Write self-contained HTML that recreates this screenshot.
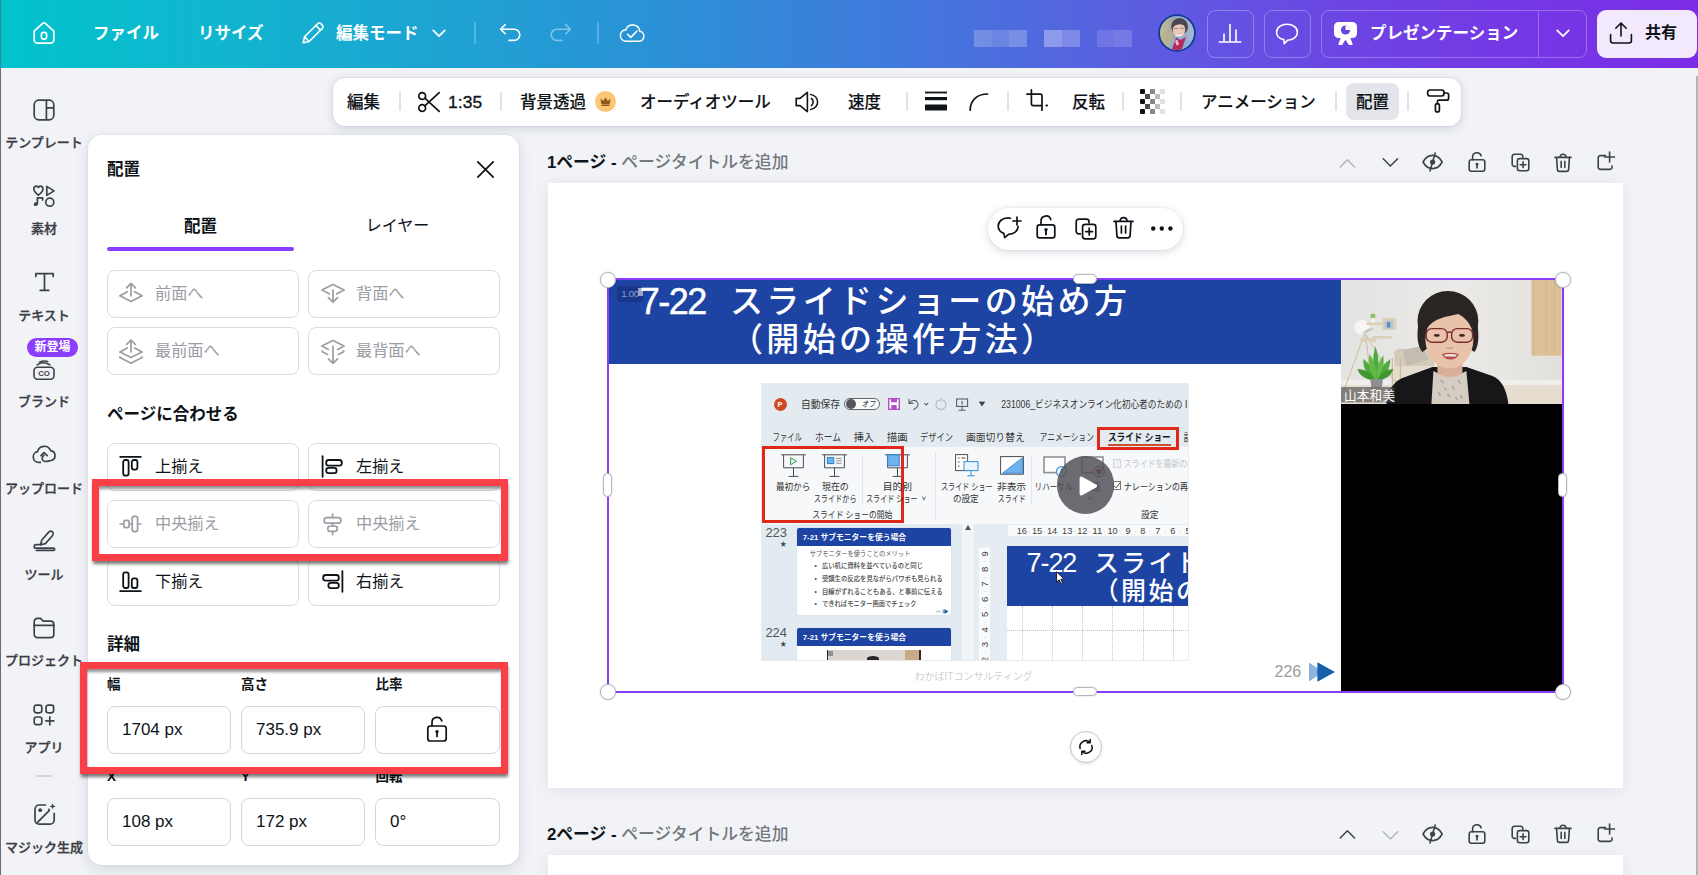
<!DOCTYPE html>
<html lang="ja">
<head>
<meta charset="utf-8">
<title>Canva</title>
<style>
*{box-sizing:border-box;margin:0;padding:0}
html,body{width:1698px;height:875px;overflow:hidden;background:#f2f3f7}
body{font-family:"Liberation Sans","Noto Sans CJK JP",sans-serif;color:#0e1318;position:relative}
.abs{position:absolute}
svg{display:block;overflow:visible}
/* header */
#hdr{position:absolute;left:0;top:0;width:1698px;height:68px;background:linear-gradient(90deg,#01c3cc 0%,#12b4cf 14%,#2a92d6 38%,#3f7bdc 52%,#5a5fe0 66%,#7040e4 82%,#7b2de6 100%)}
#hdr .t{position:absolute;top:0;height:66px;line-height:66px;color:#fff;font-weight:700;font-size:16.5px;white-space:nowrap}
#hdr .dv{position:absolute;top:22px;width:2px;height:22px;background:rgba(255,255,255,.24);border-radius:1px;margin-left:-.5px}
.hb{position:absolute;top:10px;height:48px;border:1px solid rgba(255,255,255,.28);border-radius:8px}
/* sidebar */
#side{position:absolute;left:0;top:68px;width:88px;height:807px}
#side .lb{position:absolute;left:0;width:88px;text-align:center;font-size:13px;font-weight:500;color:#3a3d44;white-space:nowrap;line-height:17px;-webkit-text-stroke:.3px #3a3d44}
#side .ic{position:absolute;left:32px;width:24px;height:24px}
#edge{position:absolute;left:0;top:0;width:1px;height:875px;background:linear-gradient(#2b9198 0,#2b9198 68px,#6b6b70 68px);z-index:50}
/* toolbar */
#tb{position:absolute;left:333px;top:78px;width:1128px;height:48px;background:#fff;border-radius:12px;box-shadow:0 0 0 1px rgba(64,87,109,.05),0 2px 10px rgba(64,87,109,.22)}
#tb .t{position:absolute;top:0;height:47px;line-height:48px;font-size:16.5px;font-weight:500;color:#0e1318;white-space:nowrap;-webkit-text-stroke:.15px #0e1318}
#tb .dv{position:absolute;top:14px;width:2px;height:19px;background:#e1e3e7;border-radius:1px;margin-left:-1px}
/* panel */
#pn{position:absolute;left:88px;top:135px;width:431px;height:730px;background:#fff;border-radius:14px;box-shadow:0 0 0 1px rgba(64,87,109,.04),0 4px 14px rgba(64,87,109,.18)}
.btn{position:absolute;height:48px;width:191.6px;border:1px solid #d9dbe0;border-radius:8px;background:#fff;font-size:16.2px;line-height:45px;white-space:nowrap}
.btn span{position:absolute;left:47px;top:0}
.btn.dis{color:#9a9da3}
.btn svg{position:absolute;left:12px;top:10px}
.h2{position:absolute;font-weight:700;font-size:16px;line-height:24px;white-space:nowrap}
.lab{position:absolute;font-weight:700;font-size:13.5px;line-height:18px;white-space:nowrap}
.inp{position:absolute;height:48px;border:1px solid #d5d7dc;border-radius:8px;font-family:'Liberation Sans',sans-serif;font-size:17px;line-height:46px;padding-left:14px;white-space:nowrap;background:#fff}
.red{position:absolute;border:7px solid #f84046;box-shadow:.5px 3.5px 3px -.5px rgba(0,0,0,.52),inset .5px 4px 3px -1px rgba(0,0,0,.42);z-index:5}
/* canvas */
.pt{position:absolute;font-size:16.8px;line-height:24px;white-space:nowrap;font-weight:700;color:#0e1318}
.pt i{font-style:normal;font-weight:500;color:#73777e}
.page{position:absolute;background:#fff;box-shadow:0 2px 14px rgba(64,87,109,.10)}
.hc{position:absolute;width:16px;height:16px;border-radius:50%;background:#fff;border:1px solid #b4b6bd;box-shadow:0 0 2px rgba(0,0,0,.2);z-index:6}
.hp{position:absolute;border-radius:5px;background:#fff;border:1px solid #b4b6bd;box-shadow:0 0 2px rgba(0,0,0,.2);z-index:6}
.pp{position:absolute;white-space:nowrap}
.ttl{position:absolute;white-space:nowrap;color:#fff;font-weight:500}
</style>
</head>
<body>
<div id="hdr">
<svg class="abs" style="left:32px;top:21px" width="24" height="24" viewBox="0 0 24 24" fill="none" stroke="#fff" stroke-width="1.7" stroke-linejoin="round" stroke-linecap="round"><path d="M2.2 10.2 10.4 2.7a2.4 2.4 0 0 1 3.2 0l8.2 7.5v8.6a3.4 3.4 0 0 1-3.4 3.4H5.6a3.4 3.4 0 0 1-3.4-3.4z"/><rect x="9.4" y="11.4" width="5.2" height="6.8" rx="2.2"/></svg>
<div class="t" style="left:93px">ファイル</div>
<div class="t" style="left:198px">リサイズ</div>
<svg class="abs" style="left:301px;top:21px" width="24" height="24" viewBox="0 0 24 24" fill="none" stroke="#fff" stroke-width="1.6" stroke-linejoin="round" stroke-linecap="round"><path d="M16.6 2.7a2.3 2.3 0 0 1 3.3 0l1.4 1.4a2.3 2.3 0 0 1 0 3.3L8.2 20.5 2.2 21.8 3.5 15.8z"/><path d="M15 4.6 19.4 9"/><path d="M3.6 15.9 8.1 20.4"/></svg>
<div class="t" style="left:336px">編集モード</div>
<svg class="abs" style="left:431px;top:25px" width="16" height="16" viewBox="0 0 16 16" fill="none" stroke="#fff" stroke-width="1.7" stroke-linecap="round" stroke-linejoin="round"><path d="M2.2 5.4 8 11.2 13.8 5.4"/></svg>
<div class="dv" style="left:474px"></div>
<svg class="abs" style="left:498px;top:21px" width="24" height="24" viewBox="0 0 24 24" fill="none" stroke="#fff" stroke-width="1.6" stroke-linecap="round" stroke-linejoin="round"><path d="M7.2 3.6 2.6 8.2l4.6 4.6"/><path d="M3 8.2h13.2a5.6 5.6 0 0 1 0 11.2H11"/></svg>
<svg class="abs" style="left:549px;top:21px;opacity:.42" width="24" height="24" viewBox="0 0 24 24" fill="none" stroke="#fff" stroke-width="1.6" stroke-linecap="round" stroke-linejoin="round"><path d="M16.8 3.6l4.6 4.6-4.6 4.6"/><path d="M21 8.2H7.8a5.6 5.6 0 0 0 0 11.2H13"/></svg>
<div class="dv" style="left:597px"></div>
<svg class="abs" style="left:618px;top:21px" width="27" height="24" viewBox="0 0 27 24" fill="none" stroke="#fff" stroke-width="1.6" stroke-linecap="round" stroke-linejoin="round"><path d="M7.2 20.2h13.4a5 5 0 0 0 1.2-9.9 7.2 7.2 0 0 0-13.9-1.6A5.8 5.8 0 0 0 7.2 20.2z"/><path d="M9.6 13.2l3.2 3.2 6.2-6.4"/></svg>
<!-- blurred title -->
<div class="abs" style="left:974px;top:30px;width:18px;height:17px;background:rgba(255,255,255,.22)"></div>
<div class="abs" style="left:992px;top:30px;width:17px;height:17px;background:rgba(255,255,255,.17)"></div>
<div class="abs" style="left:1009px;top:30px;width:18px;height:17px;background:rgba(255,255,255,.24)"></div>
<div class="abs" style="left:1044px;top:30px;width:18px;height:17px;background:rgba(255,255,255,.34)"></div>
<div class="abs" style="left:1062px;top:30px;width:18px;height:17px;background:rgba(255,255,255,.24)"></div>
<div class="abs" style="left:1097px;top:30px;width:17px;height:17px;background:rgba(255,255,255,.13)"></div>
<div class="abs" style="left:1114px;top:30px;width:18px;height:17px;background:rgba(255,255,255,.17)"></div>
<!-- avatar -->
<svg class="abs" style="left:1158px;top:14px" width="38" height="38" viewBox="0 0 38 38"><defs><clipPath id="avc"><circle cx="19" cy="19" r="17"/></clipPath><linearGradient id="avb" x1="0" x2="1"><stop offset="0" stop-color="#c6c19c"/><stop offset=".3" stop-color="#b1ae96"/><stop offset=".42" stop-color="#93a3c4"/><stop offset="1" stop-color="#a9bbd8"/></linearGradient></defs><circle cx="19" cy="19" r="18.8" fill="#0f3a9a"/><g clip-path="url(#avc)"><rect width="38" height="38" fill="url(#avb)"/><path d="M2 22l12-6 2 14-12 6z" fill="#b9b08e" opacity=".8"/><ellipse cx="21.6" cy="12.6" rx="8.4" ry="8.6" fill="#4b4750"/><ellipse cx="21" cy="15.8" rx="6.2" ry="7.6" fill="#e9c6b8"/><path d="M14.6 13.2q1-6 7-6.4 6 .2 7 6.6-3-3.2-7.4-3.2-4 .4-6.6 3z" fill="#4b4750"/><path d="M17.2 19.8q3.8 2.4 7.6 0-.8 2.6-3.8 2.6t-3.8-2.6z" fill="#fff" opacity=".9"/><path d="M15.8 14.4h4.4M22 14.4h4.4" stroke="#8d7480" stroke-width=".8"/><path d="M10 38q2-12 8-15l8-1q8 3 10 16z" fill="#8fb0d6"/><path d="M13 38l5-14.5 4.5 2.5 5.5-3L23 38z" fill="#b72a5f"/><path d="M17 27l2.5-1.5 1.5 5-2.5 1z" fill="#f0b6c8"/></g></svg>
<div class="hb" style="left:1207px;width:47px"></div>
<svg class="abs" style="left:1218px;top:21px" width="24" height="24" viewBox="0 0 24 24" fill="none" stroke="#fff" stroke-width="1.6" stroke-linecap="round"><path d="M1.2 21h21.6M6 20.5V13M12 20.5V3.6M18 20.5V9"/></svg>
<div class="hb" style="left:1264px;width:47px"></div>
<svg class="abs" style="left:1275px;top:21px" width="24" height="24" viewBox="0 0 24 24" fill="none" stroke="#fff" stroke-width="1.6" stroke-linecap="round" stroke-linejoin="round"><path d="M12 3.2c5.6 0 10.4 3.2 10.4 8 0 4.4-4.4 7.8-9.6 8L9.2 22.6l-.4-4C4.4 17.6 1.6 14.8 1.6 11.2c0-4.8 4.8-8 10.4-8z"/></svg>
<div class="hb" style="left:1321px;width:266px"></div>
<div class="abs" style="left:1538px;top:11px;width:1px;height:46px;background:rgba(255,255,255,.28)"></div>
<svg class="abs" style="left:1334px;top:22px" width="23" height="23" viewBox="0 0 23 23"><path d="M4.5 0h14a4.5 4.5 0 0 1 4.5 4.5v7a4.5 4.5 0 0 1-4.5 4.5h-2.2l2.2 5.6a1 1 0 0 1-1 1.4h-2a1 1 0 0 1-.9-.6L11.5 17.8 8.4 22.4a1 1 0 0 1-.9.6h-2a1 1 0 0 1-1-1.4L6.7 16H4.5A4.5 4.5 0 0 1 0 11.5v-7A4.5 4.5 0 0 1 4.5 0z" fill="#fff"/><circle cx="11.5" cy="8" r="4.6" fill="#6a45e2"/><path d="M11.5 8V3.4A4.6 4.6 0 0 1 16.1 8z" fill="#fff"/></svg>
<div class="t" style="left:1370px">プレゼンテーション</div>
<svg class="abs" style="left:1555px;top:25px" width="16" height="16" viewBox="0 0 16 16" fill="none" stroke="#fff" stroke-width="1.7" stroke-linecap="round" stroke-linejoin="round"><path d="M2.2 5.4 8 11.2 13.8 5.4"/></svg>
<div class="abs" style="left:1597px;top:10px;width:100px;height:48px;border-radius:9px;background:#f2e9fd"></div>
<svg class="abs" style="left:1609px;top:21px" width="24" height="24" viewBox="0 0 24 24" fill="none" stroke="#0e1318" stroke-width="1.6" stroke-linecap="round" stroke-linejoin="round"><path d="M12 15V2.2M6.8 7.2 12 2l5.2 5.2"/><path d="M1.6 13.6v6a2.4 2.4 0 0 0 2.4 2.4h16a2.4 2.4 0 0 0 2.4-2.4v-6"/></svg>
<div class="t" style="left:1645px;color:#0e1318;font-size:16px">共有</div>
</div>
<div id="side">
<svg class="abs" style="left:33px;top:30.5px" width="22" height="22" viewBox="0 0 22 22" fill="none" stroke="#3d4149" stroke-width="1.7" stroke-linejoin="round"><rect x="1.2" y="1.2" width="19.6" height="19.6" rx="4.6"/><path d="M13.4 1.2v19.6M13.4 8.8h7.4"/></svg>
<div class="lb" style="top:66.0px">テンプレート</div>
<svg class="abs" style="left:33px;top:116.5px" width="22" height="22" viewBox="0 0 22 22" fill="none" stroke="#3d4149" stroke-width="1.7" stroke-linejoin="round" stroke-linecap="round"><path d="M5.4 10.2C2.6 8 .9 6.2.9 3.9A2.4 2.4 0 0 1 5.4 2.5 2.4 2.4 0 0 1 9.9 3.9C9.9 6.2 8.2 8 5.4 10.2z"/><path d="M13.8 1.4v9l7.2-4.5z"/><circle cx="16.8" cy="17.2" r="4"/><path d="M4.4 18.8v-6h5.2v2.2"/><circle cx="2.7" cy="19.2" r="1.9" fill="#3d4149" stroke="none"/></svg>
<div class="lb" style="top:152.0px">素材</div>
<svg class="abs" style="left:34px;top:203.5px" width="22" height="20" viewBox="0 0 22 20" fill="none" stroke="#3d4149" stroke-width="1.7" stroke-linecap="round" stroke-linejoin="round"><path d="M1.8 4.4V1.6h17.4v2.8M10.5 1.6v16.8M6.2 18.4h8.6"/></svg>
<div class="lb" style="top:238.5px">テキスト</div>
<div class="abs" style="left:27px;top:270px;width:51px;height:18.5px;border-radius:10px;background:#8b3dff;color:#fff;font-size:12px;font-weight:700;line-height:18px;text-align:center;z-index:2">新登場</div>
<svg class="abs" style="left:33px;top:289.5px" width="22" height="22" viewBox="0 0 22 22" fill="none" stroke="#3d4149" stroke-width="1.6" stroke-linecap="round" stroke-linejoin="round"><rect x="1" y="9.2" width="20" height="12" rx="3.4"/><path d="M4.2 6.8C7.6 4.4 11.4 3.6 16.8 6.8"/><path d="M6.6 4.2c2.6-1.4 5-1.8 8-.6"/><text x="11" y="18.3" font-family="Liberation Sans, sans-serif" font-size="7.8" font-weight="700" text-anchor="middle" fill="#3d4149" stroke="none">CO</text></svg>
<div class="lb" style="top:324.5px">ブランド</div>
<svg class="abs" style="left:32px;top:375px" width="24" height="21" viewBox="0 0 24 21" fill="none" stroke="#3d4149" stroke-width="1.7" stroke-linecap="round" stroke-linejoin="round"><path d="M8.4 19.4H6.6A5.4 5.4 0 0 1 5.6 8.7 6.8 6.8 0 0 1 18.6 7.6a5 5 0 0 1 .2 9.9c-2.4.5-5.2 1.9-7.4.4-1.9-1.3-1.5-4.2.5-5.6"/><path d="M9 12.6l3.1-3 3.1 3"/></svg>
<div class="lb" style="top:411.5px">アップロード</div>
<svg class="abs" style="left:33px;top:461.5px" width="23" height="22" viewBox="0 0 23 22" fill="none" stroke="#3d4149" stroke-width="1.7" stroke-linecap="round" stroke-linejoin="round"><path d="M16.2 1.6a2.6 2.6 0 0 1 3.6 3.6l-7.4 8.4-4.8 1.2 1.2-4.8z"/><path d="M8.2 14.6H3a1.8 1.8 0 0 0 0 3.6h17.6a1.1 1.1 0 0 1 0 2.2H3.4"/></svg>
<div class="lb" style="top:498.0px">ツール</div>
<svg class="abs" style="left:33px;top:548.5px" width="22" height="22" viewBox="0 0 22 22" fill="none" stroke="#3d4149" stroke-width="1.7" stroke-linecap="round" stroke-linejoin="round"><path d="M1.2 8V4.6A3.2 3.2 0 0 1 4.4 1.4h3.2l2.6 2.8h7.4a3.2 3.2 0 0 1 3.2 3.2V17.4a3.2 3.2 0 0 1-3.2 3.2H4.4a3.2 3.2 0 0 1-3.2-3.2z"/><path d="M1.2 8.4h19.6"/></svg>
<div class="lb" style="top:584.0px">プロジェクト</div>
<svg class="abs" style="left:33px;top:635.5px" width="22" height="22" viewBox="0 0 22 22" fill="none" stroke="#3d4149" stroke-width="1.7" stroke-linecap="round" stroke-linejoin="round"><rect x="1.2" y="1.2" width="7.6" height="7.6" rx="2.2"/><rect x="13" y="1.2" width="7.6" height="7.6" rx="2.2"/><rect x="1.2" y="13" width="7.6" height="7.6" rx="2.2"/><path d="M16.8 12.8v8M12.8 16.8h8"/></svg>
<div class="lb" style="top:670.5px">アプリ</div>
<div class="abs" style="left:36px;top:707.2px;width:16px;height:1.5px;background:#d4d6db"></div>
<svg class="abs" style="left:33px;top:734px" width="24" height="24" viewBox="0 0 24 24" fill="none" stroke="#3d4149" stroke-width="1.7" stroke-linecap="round" stroke-linejoin="round"><path d="M12.4 3H6.2A4.2 4.2 0 0 0 2 7.2V18a4.2 4.2 0 0 0 4.2 4.2H17a4.2 4.2 0 0 0 4.2-4.2V11.4"/><path d="M4.2 20.6 16.4 8.4"/><circle cx="7.2" cy="8.2" r="1.9" fill="#3d4149" stroke="none"/><path d="M19.6 1.2l.9 2.3 2.3.9-2.3.9-.9 2.3-.9-2.3-2.3-.9 2.3-.9z" fill="#3d4149" stroke="none"/><circle cx="15.8" cy="7.4" r=".9" fill="#3d4149" stroke="none"/></svg>
<div class="lb" style="top:770.5px">マジック生成</div>
</div>
<div id="tb">
<div class="t" style="left:14px">編集</div>
<div class="dv" style="left:67px"></div>
<svg class="abs" style="left:84px;top:12px" width="24" height="24" viewBox="0 0 24 24" fill="none" stroke="#0e1318" stroke-width="1.7" stroke-linecap="round"><circle cx="5.2" cy="6" r="3.4"/><circle cx="5.2" cy="18" r="3.4"/><path d="M7.8 8.2 22.2 21.4M7.8 15.8 22.2 2.6"/></svg>
<div class="t" style="left:115px;font-family:'Liberation Sans',sans-serif;font-size:17.4px;font-weight:400;-webkit-text-stroke:.35px #0e1318;letter-spacing:.1px">1:35</div>
<div class="dv" style="left:168px"></div>
<div class="t" style="left:187px">背景透過</div>
<svg class="abs" style="left:262px;top:13px" width="21" height="21" viewBox="0 0 21 21"><circle cx="10.5" cy="10.5" r="10.5" fill="#fbc774"/><path d="M5.4 7.6l2.7 2.4 2.4-3.6 2.4 3.6 2.7-2.4-1 5.4H6.4z" fill="#8d5b1d"/><rect x="6.4" y="13.6" width="8.2" height="1.3" rx=".5" fill="#8d5b1d"/></svg>
<div class="t" style="left:307px">オーディオツール</div>
<svg class="abs" style="left:462px;top:12px" width="24" height="24" viewBox="0 0 24 24" fill="none" stroke="#0e1318" stroke-width="1.6" stroke-linecap="round" stroke-linejoin="round"><path d="M1.2 8.4h3.8L12.4 2.4v19.2L5 15.6H1.2z"/><path d="M16.4 8.4a4.6 4.6 0 0 1 0 7.2"/><path d="M15.6 4.4c4.4 1.2 7 4 7 7.6s-2.6 6.4-7 7.6" stroke-width="1.5"/></svg>
<div class="t" style="left:515px">速度</div>
<div class="dv" style="left:574px"></div>
<svg class="abs" style="left:592px;top:13px" width="22" height="21" viewBox="0 0 22 21"><rect x="0" y=".6" width="22" height="1.8" fill="#0e1318"/><rect x="0" y="6" width="22" height="3.2" fill="#0e1318"/><rect x="0" y="13.4" width="22" height="6.2" rx=".6" fill="#0e1318"/></svg>
<svg class="abs" style="left:636px;top:14px" width="20" height="20" viewBox="0 0 20 20" fill="none" stroke="#0e1318" stroke-width="1.7" stroke-linecap="round"><path d="M1.2 18.2C1.2 8.2 8.2 2 18.6 2"/></svg>
<div class="dv" style="left:675px"></div>
<svg class="abs" style="left:692px;top:10px" width="26" height="26" viewBox="0 0 26 26" fill="none" stroke="#0e1318" stroke-width="1.7" stroke-linecap="round" stroke-linejoin="round"><path d="M6.4 1.8v14.2a1.6 1.6 0 0 0 1.6 1.6h8.4"/><path d="M2 6.2h13.4a1.6 1.6 0 0 1 1.6 1.6v14.4"/><path d="M21.4 17.6h.6" stroke-width="2"/></svg>
<div class="t" style="left:739px">反転</div>
<div class="dv" style="left:790px"></div>
<svg class="abs" style="left:807px;top:11px" width="25" height="25" viewBox="0 0 25 25"><g fill="#0e1318"><rect x="0" y="0" width="5" height="5" rx="1"/><rect x="0" y="10" width="5" height="5" rx="1"/><rect x="0" y="20" width="5" height="5" rx="1"/><rect x="5" y="5" width="5" height="5" opacity=".75"/><rect x="5" y="15" width="5" height="5" opacity=".75"/><rect x="10" y="0" width="5" height="5" opacity=".5"/><rect x="10" y="10" width="5" height="5" opacity=".5"/><rect x="10" y="20" width="5" height="5" opacity=".5"/><rect x="15" y="5" width="5" height="5" opacity=".28"/><rect x="15" y="15" width="5" height="5" opacity=".28"/><rect x="20" y="0" width="5" height="5" opacity=".12"/><rect x="20" y="10" width="5" height="5" opacity=".12"/><rect x="20" y="20" width="5" height="5" opacity=".12"/></g></svg>
<div class="dv" style="left:848px"></div>
<div class="t" style="left:868px">アニメーション</div>
<div class="dv" style="left:1003px"></div>
<div class="abs" style="left:1013px;top:5px;width:53px;height:37px;border-radius:8px;background:#e3e5ea"></div>
<div class="t" style="left:1023px">配置</div>
<div class="dv" style="left:1075px"></div>
<svg class="abs" style="left:1092px;top:10px" width="26" height="26" viewBox="0 0 26 26" fill="none" stroke="#0e1318" stroke-width="1.7" stroke-linecap="round" stroke-linejoin="round"><rect x="2.6" y="2" width="16.4" height="6" rx="2.4"/><path d="M19 5h2.6a2 2 0 0 1 2 2v3.2a2 2 0 0 1-2 2H14a1.6 1.6 0 0 0-1.6 1.6v1.8"/><rect x="10.4" y="15.6" width="4" height="8.4" rx="2"/></svg>
</div>
<div id="pn">
<div class="h2" style="left:19px;top:22px;font-size:16.5px">配置</div>
<svg class="abs" style="left:388px;top:25px" width="19" height="19" viewBox="0 0 19 19" fill="none" stroke="#0e1318" stroke-width="1.7" stroke-linecap="round" stroke-linejoin="round"><path d="M1.8 1.8 17.2 17.2M17.2 1.8 1.8 17.2"/></svg>
<div class="h2" style="left:19px;top:79px;width:187px;text-align:center;font-size:16.5px">配置</div>
<div class="h2" style="left:216px;top:79px;width:187px;text-align:center;font-weight:400;font-size:16px">レイヤー</div>
<div class="abs" style="left:19px;top:112px;width:187px;height:4px;border-radius:2px;background:#8b3dff"></div>
<div class="btn dis" style="left:19px;top:135px"><span>前面へ</span></div><svg class="abs" style="left:30.5px;top:146px" width="24" height="24" viewBox="0 0 24 24" fill="none" stroke="#9a9da3" stroke-width="1.7" stroke-linecap="round" stroke-linejoin="round"><path d="M7.6 6.9 12 2.4l4.4 4.5M12 2.6V14.8"/><path d="M8.4 10.7.9 14.8 12 20.4l11.1-5.6-7.5-4.1"/></svg>
<div class="btn dis" style="left:220px;top:135px"><span>背面へ</span></div><svg class="abs" style="left:232.5px;top:147.4px" width="24" height="24" viewBox="0 0 24 24" fill="none" stroke="#9a9da3" stroke-width="1.7" stroke-linecap="round" stroke-linejoin="round"><path d="M7.4 15.6 12 20.2l4.6-4.6M12 8.2V20"/><path d="M8.2 11.8.9 8.1 12 2.6l11.1 5.5-7.3 3.7"/></svg>
<div class="btn dis" style="left:19px;top:192px"><span>最前面へ</span></div><svg class="abs" style="left:30.5px;top:202.6px" width="24" height="28" viewBox="0 0 24 28" fill="none" stroke="#9a9da3" stroke-width="1.7" stroke-linecap="round" stroke-linejoin="round"><path d="M7.6 6.5 12 2l4.4 4.5M12 2.2V14"/><path d="M8.4 10 .9 14 12 19.6 23.1 14l-7.5-4"/><path d="M.9 18.8v.8L12 25.2l11.1-5.6v-.8"/></svg>
<div class="btn dis" style="left:220px;top:192px"><span>最背面へ</span></div><svg class="abs" style="left:232.5px;top:202.8px" width="24" height="28" viewBox="0 0 24 28" fill="none" stroke="#9a9da3" stroke-width="1.7" stroke-linecap="round" stroke-linejoin="round"><path d="M7.4 20.8 12 25.4l4.6-4.6M12 8.4V25.2"/><path d="M7.4 11.4.9 8.1 12 2.6l11.1 5.5-6.5 3.3"/><path d="M6.6 16.4 1.4 13.8v-1M17.4 16.4l5.2-2.6v-1"/></svg>
<div class="h2" style="left:19px;top:266.5px;font-size:16.5px">ページに合わせる</div>
<div class="btn" style="left:19px;top:308px"><span>上揃え</span></div><svg class="abs" style="left:31px;top:320px" width="23" height="22" viewBox="0 0 23 22" fill="none" stroke="#0e1318" stroke-width="1.8" stroke-linecap="round" stroke-linejoin="round"><path d="M1.2 1.8h20.6"/><rect x="4.2" y="5" width="5.4" height="15.6" rx="2"/><rect x="12.8" y="5" width="5.6" height="9.6" rx="2"/></svg>
<div class="btn" style="left:220px;top:308px"><span>左揃え</span></div><svg class="abs" style="left:233px;top:320px" width="23" height="23" viewBox="0 0 23 23" fill="none" stroke="#0e1318" stroke-width="1.8" stroke-linecap="round" stroke-linejoin="round"><path d="M1.6 1.2v20.6"/><rect x="5.2" y="5" width="15.6" height="5.6" rx="2.4"/><rect x="5.2" y="12.8" width="10.4" height="5.4" rx="2.4"/></svg>
<div class="btn dis" style="left:19px;top:365px"><span>中央揃え</span></div><svg class="abs" style="left:31px;top:378.4px" width="23" height="22" viewBox="0 0 23 22" fill="none" stroke="#9a9da3" stroke-width="1.7" stroke-linecap="round" stroke-linejoin="round"><path d="M1.2 11h3.4M10.2 11h3M18.6 11h3.2"/><rect x="4.8" y="7.4" width="5.4" height="7.2" rx="2"/><rect x="13.2" y="3.4" width="5.4" height="15.2" rx="2"/></svg>
<div class="btn dis" style="left:220px;top:365px"><span>中央揃え</span></div><svg class="abs" style="left:233px;top:378.4px" width="23" height="23" viewBox="0 0 23 23" fill="none" stroke="#9a9da3" stroke-width="1.7" stroke-linecap="round" stroke-linejoin="round"><path d="M11.6 1.2v3.4M11.6 10.2v3M11.6 18.4v3.2"/><rect x="3.2" y="4.6" width="16.6" height="5.6" rx="2.4"/><rect x="6.8" y="13" width="9.4" height="5.4" rx="2.4"/></svg>
<div class="btn" style="left:19px;top:423px"><span>下揃え</span></div><svg class="abs" style="left:31px;top:434.6px" width="23" height="23" viewBox="0 0 23 23" fill="none" stroke="#0e1318" stroke-width="1.8" stroke-linecap="round" stroke-linejoin="round"><path d="M1.2 21.2h20.6"/><rect x="4.2" y="2.4" width="5.4" height="15.6" rx="2"/><rect x="12.8" y="8.4" width="5.6" height="9.6" rx="2"/></svg>
<div class="btn" style="left:220px;top:423px"><span>右揃え</span></div><svg class="abs" style="left:233px;top:434.6px" width="23" height="23" viewBox="0 0 23 23" fill="none" stroke="#0e1318" stroke-width="1.8" stroke-linecap="round" stroke-linejoin="round"><path d="M21.4 1.2v20.6"/><rect x="2.2" y="5" width="15.6" height="5.6" rx="2.4"/><rect x="7.4" y="12.8" width="10.4" height="5.4" rx="2.4"/></svg>
<div class="red" style="left:4.3px;top:344px;width:415.7px;height:82px"></div>
<div class="h2" style="left:19px;top:496.5px;font-size:16.5px">詳細</div>
<div class="lab" style="left:19px;top:541px">幅</div>
<div class="lab" style="left:153px;top:541px">高さ</div>
<div class="lab" style="left:287.5px;top:541px">比率</div>
<div class="inp" style="left:19px;top:571px;width:123.6px">1704 px</div>
<div class="inp" style="left:153px;top:571px;width:124.4px">735.9 px</div>
<div class="inp" style="left:287px;top:571px;width:125px"></div>
<svg class="abs" style="left:337px;top:579.5px" width="24" height="28" viewBox="0 0 24 28" fill="none" stroke="#0e1318" stroke-width="1.7" stroke-linecap="round" stroke-linejoin="round"><rect x="2.8" y="11" width="18.4" height="15" rx="2.6"/><path d="M7 11V7.4a5 5 0 0 1 9.8-1.4"/><circle cx="12" cy="16.6" r="1.7" fill="#0e1318" stroke="none"/><path d="M12 17v4.4" stroke-width="1.8"/></svg>
<div class="lab" style="left:19px;top:632.5px">X</div>
<div class="lab" style="left:153px;top:632.5px">Y</div>
<div class="lab" style="left:287.5px;top:632.5px">回転</div>
<div class="red" style="left:-8px;top:527px;width:428px;height:111.6px"></div>
<div class="inp" style="left:19px;top:663px;width:123.6px">108 px</div>
<div class="inp" style="left:153px;top:663px;width:124.4px">172 px</div>
<div class="inp" style="left:287px;top:663px;width:125px">0°</div>
</div>
<div id="cv">
<div class="pt" style="left:547px;top:150.8px">1ページ - <i>ページタイトルを追加</i></div>
<svg class="abs" style="left:1338.6px;top:158.4px" width="17" height="11" viewBox="0 0 17 11" fill="none" stroke="#b3b6bc" stroke-width="1.5" stroke-linecap="round" stroke-linejoin="round"><path d="M1.2 9 8.4 1.8 15.6 9"/></svg>
<svg class="abs" style="left:1381.6px;top:157.0px" width="17" height="11" viewBox="0 0 17 11" fill="none" stroke="#3d4149" stroke-width="1.5" stroke-linecap="round" stroke-linejoin="round"><path d="M1.2 1.8 8.4 9 15.6 1.8"/></svg>
<svg class="abs" style="left:1422.4px;top:152.0px" width="22" height="20" viewBox="0 0 22 20" fill="none" stroke="#3d4149" stroke-width="1.6" stroke-linecap="round" stroke-linejoin="round"><path d="M1 10c2.4-4.4 5.8-6.6 9.6-6.6s7.2 2.2 9.6 6.6c-2.4 4.4-5.8 6.6-9.6 6.6S3.4 14.4 1 10z"/><circle cx="10.6" cy="10" r="2.6" fill="#3d4149" stroke="none"/><path d="M13.2 1 8 19"/></svg>
<svg class="abs" style="left:1468.2px;top:151.2px" width="18" height="22" viewBox="0 0 18 22" fill="none" stroke="#3d4149" stroke-width="1.6" stroke-linecap="round" stroke-linejoin="round"><rect x="1.2" y="8.8" width="15.6" height="11.4" rx="2.2"/><path d="M4.6 8.8V6a4.4 4.4 0 0 1 8.6-1.2"/><circle cx="9" cy="13.2" r="1.4" fill="#3d4149" stroke="none"/><path d="M9 13.4v3.4" stroke-width="1.7"/></svg>
<svg class="abs" style="left:1510.6px;top:153.2px" width="19" height="19" viewBox="0 0 19 19" fill="none" stroke="#3d4149" stroke-width="1.6" stroke-linecap="round" stroke-linejoin="round"><path d="M4.6 13.4H3.4a2.2 2.2 0 0 1-2.2-2.2V3.4a2.2 2.2 0 0 1 2.2-2.2h6.2a2.2 2.2 0 0 1 2.2 2.2v.8"/><rect x="6.4" y="5.6" width="11.4" height="12.2" rx="2.2"/><path d="M12.1 8.8v5.8M9.2 11.7h5.8"/></svg>
<svg class="abs" style="left:1553.8px;top:152.6px" width="18" height="20" viewBox="0 0 18 20" fill="none" stroke="#3d4149" stroke-width="1.6" stroke-linecap="round" stroke-linejoin="round"><path d="M1 4.4h16"/><path d="M6 4.2c0-1.8 1.2-3 3-3s3 1.2 3 3"/><path d="M2.6 4.6l.8 12a2 2 0 0 0 2 1.8h7.2a2 2 0 0 0 2-1.8l.8-12"/><path d="M7.2 8.4v6M10.8 8.4v6"/></svg>
<svg class="abs" style="left:1597px;top:151.0px" width="19" height="20" viewBox="0 0 19 20" fill="none" stroke="#3d4149" stroke-width="1.6" stroke-linecap="round" stroke-linejoin="round"><path d="M8.6 4.6H3.4a2.2 2.2 0 0 0-2.2 2.2v9.4a2.2 2.2 0 0 0 2.2 2.2h9.4A2.2 2.2 0 0 0 15 16.2v-1.2"/><path d="M12.6 1v10M7.6 6h10"/></svg>
<div class="page" style="left:548px;top:182.5px;width:1074.6px;height:605px"></div>
<div class="pt" style="left:547px;top:822.6px">2ページ - <i>ページタイトルを追加</i></div>
<svg class="abs" style="left:1338.6px;top:828.6px" width="17" height="11" viewBox="0 0 17 11" fill="none" stroke="#3d4149" stroke-width="1.5" stroke-linecap="round" stroke-linejoin="round"><path d="M1.2 9 8.4 1.8 15.6 9"/></svg>
<svg class="abs" style="left:1381.6px;top:830.2px" width="17" height="11" viewBox="0 0 17 11" fill="none" stroke="#b3b6bc" stroke-width="1.5" stroke-linecap="round" stroke-linejoin="round"><path d="M1.2 1.8 8.4 9 15.6 1.8"/></svg>
<svg class="abs" style="left:1422.4px;top:823.8px" width="22" height="20" viewBox="0 0 22 20" fill="none" stroke="#3d4149" stroke-width="1.6" stroke-linecap="round" stroke-linejoin="round"><path d="M1 10c2.4-4.4 5.8-6.6 9.6-6.6s7.2 2.2 9.6 6.6c-2.4 4.4-5.8 6.6-9.6 6.6S3.4 14.4 1 10z"/><circle cx="10.6" cy="10" r="2.6" fill="#3d4149" stroke="none"/><path d="M13.2 1 8 19"/></svg>
<svg class="abs" style="left:1468.2px;top:823.0px" width="18" height="22" viewBox="0 0 18 22" fill="none" stroke="#3d4149" stroke-width="1.6" stroke-linecap="round" stroke-linejoin="round"><rect x="1.2" y="8.8" width="15.6" height="11.4" rx="2.2"/><path d="M4.6 8.8V6a4.4 4.4 0 0 1 8.6-1.2"/><circle cx="9" cy="13.2" r="1.4" fill="#3d4149" stroke="none"/><path d="M9 13.4v3.4" stroke-width="1.7"/></svg>
<svg class="abs" style="left:1510.6px;top:825.0px" width="19" height="19" viewBox="0 0 19 19" fill="none" stroke="#3d4149" stroke-width="1.6" stroke-linecap="round" stroke-linejoin="round"><path d="M4.6 13.4H3.4a2.2 2.2 0 0 1-2.2-2.2V3.4a2.2 2.2 0 0 1 2.2-2.2h6.2a2.2 2.2 0 0 1 2.2 2.2v.8"/><rect x="6.4" y="5.6" width="11.4" height="12.2" rx="2.2"/><path d="M12.1 8.8v5.8M9.2 11.7h5.8"/></svg>
<svg class="abs" style="left:1553.8px;top:824.4px" width="18" height="20" viewBox="0 0 18 20" fill="none" stroke="#3d4149" stroke-width="1.6" stroke-linecap="round" stroke-linejoin="round"><path d="M1 4.4h16"/><path d="M6 4.2c0-1.8 1.2-3 3-3s3 1.2 3 3"/><path d="M2.6 4.6l.8 12a2 2 0 0 0 2 1.8h7.2a2 2 0 0 0 2-1.8l.8-12"/><path d="M7.2 8.4v6M10.8 8.4v6"/></svg>
<svg class="abs" style="left:1597px;top:822.8px" width="19" height="20" viewBox="0 0 19 20" fill="none" stroke="#3d4149" stroke-width="1.6" stroke-linecap="round" stroke-linejoin="round"><path d="M8.6 4.6H3.4a2.2 2.2 0 0 0-2.2 2.2v9.4a2.2 2.2 0 0 0 2.2 2.2h9.4A2.2 2.2 0 0 0 15 16.2v-1.2"/><path d="M12.6 1v10M7.6 6h10"/></svg>
<div class="page" style="left:548px;top:855px;width:1074.6px;height:40px"></div>
<!-- floating toolbar -->
<div class="abs" style="left:988px;top:208px;width:195.4px;height:42px;border-radius:21px;background:#fff;box-shadow:0 0 0 1px rgba(64,87,109,.04),0 2px 9px rgba(64,87,109,.22)"></div>
<svg class="abs" style="left:996.6px;top:216px" width="26" height="25" viewBox="0 0 26 25" fill="none" stroke="#0e1318" stroke-width="1.7" stroke-linecap="round" stroke-linejoin="round"><path d="M13.4 2.2C12.6 2 11.8 1.9 11 1.9 5.6 1.9 1.2 5.4 1.2 10c0 3.2 2.2 6 5.6 7.4l.9 4.2 3.8-3.2c5.2-.2 9.4-3.4 9.6-7.8"/><path d="M20 1v8M16 5h8"/></svg>
<svg class="abs" style="left:1036.4px;top:214px" width="20" height="26" viewBox="0 0 20 26" fill="none" stroke="#0e1318" stroke-width="1.7" stroke-linecap="round" stroke-linejoin="round"><rect x="1.2" y="10.8" width="17.6" height="13" rx="2.4"/><path d="M5 10.8V7a5 5 0 0 1 9.8-1.4"/><circle cx="10" cy="15.6" r="1.7" fill="#0e1318" stroke="none"/><path d="M10 16v4.4" stroke-width="1.9"/></svg>
<svg class="abs" style="left:1074.6px;top:217.8px" width="22" height="22" viewBox="0 0 22 22" fill="none" stroke="#0e1318" stroke-width="1.7" stroke-linecap="round" stroke-linejoin="round"><path d="M5.4 15.8H3.8a2.6 2.6 0 0 1-2.6-2.6V3.8a2.6 2.6 0 0 1 2.6-2.6h7.6A2.6 2.6 0 0 1 14 3.8v1"/><rect x="7.6" y="6.4" width="13.2" height="14.4" rx="2.6"/><path d="M14.2 10.2v6.8M10.8 13.6h6.8"/></svg>
<svg class="abs" style="left:1113.4px;top:216px" width="21" height="24" viewBox="0 0 21 24" fill="none" stroke="#0e1318" stroke-width="1.7" stroke-linecap="round" stroke-linejoin="round"><path d="M1 5.4h19"/><path d="M7 5.2c0-2.2 1.4-3.6 3.5-3.6s3.5 1.4 3.5 3.6"/><path d="M3 5.6l.9 14a2.4 2.4 0 0 0 2.4 2.2h8.4a2.4 2.4 0 0 0 2.4-2.2l.9-14"/><path d="M8.4 10v7M12.6 10v7"/></svg>
<svg class="abs" style="left:1150px;top:225px" width="24" height="7" viewBox="0 0 24 7"><circle cx="3.2" cy="3.5" r="2.2" fill="#0e1318"/><circle cx="11.8" cy="3.5" r="2.2" fill="#0e1318"/><circle cx="20.4" cy="3.5" r="2.2" fill="#0e1318"/></svg>
<!--SLIDE--><div id="slide" class="abs" style="left:608.5px;top:280px;width:953px;height:410.6px;background:#fff;overflow:hidden">
<div class="abs" style="left:0;top:0;width:732.1px;height:83.6px;background:#1d43a3"></div>
<div class="abs" style="left:8.7px;top:5.6px;width:25.6px;height:16.4px;border-radius:3px;background:#19378a;color:#8d9cc9;font-size:9.6px;line-height:16px;text-align:center;font-family:'Liberation Sans',sans-serif;letter-spacing:-.3px">1.00</div>
<div class="abs" style="left:29.9px;top:7.6px;width:4.6px;height:8px;background:#aab3cc;opacity:.9"></div>
<div class="ttl" style="left:31.2px;top:-0.4px;font-size:36px;line-height:44px;letter-spacing:-1.5px;-webkit-text-stroke:.5px #fff">7-22</div>
<div class="ttl" style="left:121.4px;top:-0.2px;font-size:33px;line-height:44px;letter-spacing:3.4px">スライドショーの始め方</div>
<div class="ttl" style="left:121.4px;top:38px;font-size:33px;line-height:44px;letter-spacing:3.4px">（開始の操作方法）</div>
<div class="abs" style="left:153.5px;top:104px;width:426px;height:276px;overflow:hidden;box-shadow:0 0 0 1px rgba(0,0,0,.08);filter:blur(.35px)"><div class="abs" style="left:0;top:0;width:426px;height:63px;background:#e3ebf1"></div>
<div class="abs" style="left:0;top:63px;width:426px;height:77px;background:#f6f8fa"></div>
<div class="abs" style="left:0;top:140px;width:426px;height:136px;background:#e2ebf1"></div>
<div class="abs" style="left:12px;top:13.5px;width:13px;height:13px;border-radius:50%;background:#cf4a23"></div>
<div class="abs" style="left:82px;top:13.8px;width:36px;height:12.6px;border-radius:7px;border:1px solid #666;background:#fbfcfd"></div>
<div class="abs" style="left:84px;top:15px;width:10px;height:10px;border-radius:50%;background:#55565a"></div>
<svg class="abs" style="left:126px;top:14px" width="12" height="12" viewBox="0 0 12 12"><rect x=".7" y=".7" width="10.6" height="10.6" fill="#fff" stroke="#b650c2" stroke-width="1.4"/><rect x="3" y=".7" width="6" height="3.6" fill="#b650c2"/><rect x="3.4" y="7" width="5.2" height="4.2" fill="#b650c2"/></svg>
<svg class="abs" style="left:145px;top:13px" width="64" height="15" viewBox="0 0 64 15" fill="none" stroke="#5a5f66" stroke-width="1.1" stroke-linecap="round"><path d="M2 2.4v4h4M2.4 6c2-3 6-3.6 8-.8 1.6 2.4.4 5.4-3.6 7.2"/><path d="M17.6 6.4l1.6 1.6 1.6-1.6"/><path d="M36 3a5 5 0 1 1-4 0M34 1.2v3" stroke="#b4b9bf"/><rect x="49.6" y="2" width="11" height="7.4"/><path d="M55.1 9.4v3.6M52 13.2h6.2M55.1 4.4v2.6"/></svg>
<svg class="abs" style="left:217.4px;top:18px" width="6" height="5" viewBox="0 0 6 5"><path d="M0 0h6L3 4.4z" fill="#444"/><path d="M0 0h6" stroke="#444" stroke-width=".8"/></svg>
<div class="abs" style="left:346px;top:60.4px;width:63px;height:1.4px;background:#c8502a"></div>
<div class="abs" style="left:335px;top:42.6px;width:81.5px;height:23px;border:3px solid #e0281a"></div>
<svg class="abs" style="left:19px;top:69.6px" width="25" height="24" viewBox="0 0 25 24" fill="none" stroke="#4a4d52" stroke-width="1"><path d="M0 .8h25M2.6 .8v13h19.8v-13M12.5 13.8v8.4M7.6 22.4h9.8"/><path d="M9.6 3.6v7.2l6-3.6z" stroke="#3aa05a" fill="#dff2e3"/></svg>
<svg class="abs" style="left:60px;top:69.6px" width="25" height="24" viewBox="0 0 25 24" fill="none" stroke="#4a4d52" stroke-width="1"><path d="M0 .8h25M2.6 .8v13h19.8v-13M12.5 13.8v8.4M7.6 22.4h9.8"/><rect x="5.4" y="3.6" width="6.4" height="6" fill="#6db3ee" stroke="#2f7fc8"/><path d="M14 4.4h5.6M14 6.8h5.6M14 9.2h5.6" stroke="#8a8d92"/></svg>
<svg class="abs" style="left:123px;top:69.6px" width="25" height="24" viewBox="0 0 25 24" fill="none" stroke="#4a4d52" stroke-width="1"><path d="M0 .8h25M2.6 .8v13h19.8v-13M12.5 13.8v8.4M7.6 22.4h9.8"/><rect x="2.6" y=".8" width="11.6" height="11" fill="#6db3ee" stroke="#2f7fc8"/></svg>
<div class="abs" style="left:99.5px;top:72px;width:1px;height:48px;background:#e1e4e8"></div>
<div class="abs" style="left:172.5px;top:68px;width:1px;height:68px;background:#e1e4e8"></div>
<div class="abs" style="left:-0.4px;top:62px;width:142px;height:77px;border:3px solid #e0281a"></div>
<svg class="abs" style="left:193px;top:70px" width="26" height="24" viewBox="0 0 26 24" fill="none" stroke="#4a4d52" stroke-width="1"><rect x=".6" y=".6" width="12" height="16" fill="#fff"/><path d="M3 4h1.6M3 8h1.6M3 12h1.6M6.4 4h4"/><rect x="9" y="7.6" width="14" height="9" fill="#eaf4fc" stroke="#2f8fd8"/><path d="M16 16.6v5M12.4 21.8h7.2" stroke="#2f8fd8"/></svg>
<svg class="abs" style="left:237.6px;top:72.4px" width="24" height="19" viewBox="0 0 24 19"><rect x=".6" y=".6" width="22.8" height="17.6" fill="#fff" stroke="#4a4d52"/><path d="M2.4 17.2 22.4 1.8v15.4z" fill="#6db3ee" stroke="#2f7fc8" stroke-width=".8"/></svg>
<div class="abs" style="left:269px;top:72px;width:1px;height:48px;background:#e1e4e8"></div>
<svg class="abs" style="left:281px;top:72px" width="26" height="22" viewBox="0 0 26 22" fill="none"><rect x="1" y="1" width="21" height="15.6" fill="#fdfdfd" stroke="#8e9196" stroke-width="1.6"/><circle cx="18.4" cy="15.6" r="5" fill="#eef6fc" stroke="#3f8fd4" stroke-width="1.2"/><path d="M18.4 12.6v3.2h2" stroke="#3f8fd4" stroke-width="1"/></svg>
<svg class="abs" style="left:319px;top:72px" width="26" height="22" viewBox="0 0 26 22" fill="none"><rect x="1" y="1" width="21" height="15.6" fill="#fdfdfd" stroke="#8e9196" stroke-width="1.6"/><circle cx="18" cy="15.6" r="5.2" fill="#fff" stroke="#55585d" stroke-width="1"/><circle cx="18" cy="15.6" r="2.8" fill="#c7322c"/></svg>
<div class="abs" style="left:350.6px;top:75.4px;width:8.6px;height:8.6px;border:1px solid #d3d6da;background:#eef0f2"></div>
<div class="abs" style="left:350.6px;top:97.4px;width:8.6px;height:8.6px;border:1px solid #777;background:#fff"></div>
<svg class="abs" style="left:351.4px;top:98.4px" width="8" height="7" viewBox="0 0 8 7" fill="none" stroke="#444" stroke-width="1"><path d="M1 3.6 3 5.8 7 1"/></svg>
<div class="abs" style="left:34.7px;top:144px;width:154.3px;height:87.4px;background:#fff;border-radius:2px;overflow:hidden;box-shadow:0 0 1px rgba(0,0,0,.25)"><div style="height:18.3px;background:#1d43a3"></div></div>
<svg class="abs" style="left:174px;top:224.5px" width="13" height="5" viewBox="0 0 13 5"><rect x="0" y="1.5" width="5" height="2" fill="#d5d8dc"/><path d="M6.5 0v5L10 2.5z" fill="#7fb0dc"/><path d="M8.5 0v5l4-2.5z" fill="#1560a8"/></svg>
<div class="abs" style="left:34.7px;top:244.3px;width:154.3px;height:31.7px;background:#fff;border-radius:2px 2px 0 0;overflow:hidden;box-shadow:0 0 1px rgba(0,0,0,.25)"><div style="height:17.9px;background:#1d43a3"></div><div style="position:absolute;left:30px;top:21.4px;width:94.4px;height:12px;background:linear-gradient(90deg,#26282c 0,#26282c 1px,#d9d4cf 1px,#dcd7d2 78px,#c8ab86 78px,#c8ab86 92px,#2c2c2c 92px)"></div><div style="position:absolute;left:31px;top:22.4px;width:5px;height:5px;background:#8a8f98"></div><div style="position:absolute;left:70px;top:27.4px;width:12px;height:5px;border-radius:50% 50% 0 0;background:#2a2625"></div></div>
<div class="abs" style="left:200px;top:140px;width:12px;height:136px;background:#f1f5f8"></div>
<svg class="abs" style="left:203.4px;top:140.6px" width="6" height="5" viewBox="0 0 6 5"><path d="M0 5 3 0l3 5z" fill="#555"/></svg>
<div class="abs" style="left:213px;top:140px;width:213px;height:136px;background:#e6edf2"></div>
<div class="abs" style="left:246.4px;top:141px;width:179.6px;height:10.8px;background:#f8fafb"></div>
<div class="abs" style="left:216.7px;top:164px;width:11.8px;height:112px;background:#f8fafb"></div>
<div class="abs" style="left:245.2px;top:162.3px;width:180.8px;height:113.7px;background:#fff;overflow:hidden"><div style="height:60.1px;background:#1d43a3"></div><div style="position:absolute;left:14.6px;top:60px;width:0;height:54px;border-left:1px dotted #c2c6cb"></div><div style="position:absolute;left:44.6px;top:60px;width:0;height:54px;border-left:1px dotted #c2c6cb"></div><div style="position:absolute;left:74.8px;top:60px;width:0;height:54px;border-left:1px dotted #c2c6cb"></div><div style="position:absolute;left:105.3px;top:60px;width:0;height:54px;border-left:1px dotted #c2c6cb"></div><div style="position:absolute;left:135.5px;top:60px;width:0;height:54px;border-left:1px dotted #c2c6cb"></div><div style="position:absolute;left:165.4px;top:60px;width:0;height:54px;border-left:1px dotted #c2c6cb"></div><div style="position:absolute;left:0;top:84px;width:181px;height:0;border-top:1px dotted #c2c6cb"></div><div class="ttl" style="left:19.4px;top:0.6px;font-size:27px;line-height:32px;letter-spacing:-1.1px">7-22</div><div class="ttl" style="left:86.5px;top:1.2px;font-size:25px;line-height:32px;letter-spacing:2.4px">スライド</div><div class="ttl" style="left:86.5px;top:28.5px;font-size:25px;line-height:32px;letter-spacing:2.4px">（開始の操</div></div>
<svg class="abs" style="left:0;top:0" width="426" height="276" viewBox="0 0 426 276" font-family="Liberation Sans, Noto Sans CJK JP, sans-serif"><text x="15.6" y="22.9" font-size="7.5" fill="#fff" font-weight="700">P</text><text x="39" y="23.6" font-size="10" fill="#333" textLength="39" lengthAdjust="spacingAndGlyphs">自動保存</text><text x="99.5" y="23.1" font-size="8.6" fill="#333" textLength="14" lengthAdjust="spacingAndGlyphs" font-style="italic">オフ</text><text x="239.3" y="23.6" font-size="10" fill="#333" textLength="186" lengthAdjust="spacingAndGlyphs">231006_ビジネスオンライン化初心者のための I</text><text x="10.4" y="56.7" font-size="10.4" fill="#3a3a3a" textLength="29.6" lengthAdjust="spacingAndGlyphs">ファイル</text><text x="53" y="56.7" font-size="10.4" fill="#3a3a3a" textLength="26" lengthAdjust="spacingAndGlyphs">ホーム</text><text x="91.7" y="56.7" font-size="10.4" fill="#3a3a3a" textLength="20.3" lengthAdjust="spacingAndGlyphs">挿入</text><text x="124.7" y="56.7" font-size="10.4" fill="#3a3a3a" textLength="20.9" lengthAdjust="spacingAndGlyphs">描画</text><text x="158" y="56.7" font-size="10.4" fill="#3a3a3a" textLength="33" lengthAdjust="spacingAndGlyphs">デザイン</text><text x="204" y="56.7" font-size="10.4" fill="#3a3a3a" textLength="58.7" lengthAdjust="spacingAndGlyphs">画面切り替え</text><text x="277.5" y="56.7" font-size="10.4" fill="#3a3a3a" textLength="54.5" lengthAdjust="spacingAndGlyphs">アニメーション</text><text x="346" y="56.8" font-size="10.6" fill="#1a1a1a" textLength="62.7" lengthAdjust="spacingAndGlyphs" font-weight="700">スライド ショー</text><text x="421.4" y="56.7" font-size="10.4" fill="#3a3a3a">記</text><text x="13.9" y="105.9" font-size="9.3" fill="#333" textLength="34.4" lengthAdjust="spacingAndGlyphs">最初から</text><text x="60" y="105.9" font-size="9.3" fill="#333" textLength="26.8" lengthAdjust="spacingAndGlyphs">現在の</text><text x="51.7" y="118.1" font-size="9.3" fill="#333" textLength="42.9" lengthAdjust="spacingAndGlyphs">スライドから</text><text x="120.7" y="106.1" font-size="9.6" fill="#333" textLength="29.3" lengthAdjust="spacingAndGlyphs">目的別</text><text x="104" y="118.1" font-size="9.3" fill="#333" textLength="51.6" lengthAdjust="spacingAndGlyphs">スライド ショー</text><text x="159.4" y="117.3" font-size="8" fill="#333">˅</text><text x="50.3" y="133.7" font-size="9.3" fill="#333" textLength="80" lengthAdjust="spacingAndGlyphs">スライド ショーの開始</text><text x="179" y="105.9" font-size="9.3" fill="#333" textLength="51.6" lengthAdjust="spacingAndGlyphs">スライド ショー</text><text x="191" y="118.1" font-size="9.3" fill="#333" textLength="25.7" lengthAdjust="spacingAndGlyphs">の設定</text><text x="235" y="106.1" font-size="9.6" fill="#333" textLength="29" lengthAdjust="spacingAndGlyphs">非表示</text><text x="235.8" y="118.1" font-size="9.3" fill="#333" textLength="27.8" lengthAdjust="spacingAndGlyphs">スライド</text><text x="272.6" y="105.9" font-size="9.3" fill="#333" textLength="37.9" lengthAdjust="spacingAndGlyphs">リハーサル</text><text x="319" y="105.9" font-size="9.3" fill="#333" textLength="19.4" lengthAdjust="spacingAndGlyphs">録画</text><text x="325.6" y="117.1" font-size="8" fill="#333">˅</text><text x="361.8" y="83.4" font-size="9.4" fill="#c3c6ca" textLength="71.3" lengthAdjust="spacingAndGlyphs">スライドを最新の状</text><text x="361.8" y="105.5" font-size="9.6" fill="#333" textLength="72.3" lengthAdjust="spacingAndGlyphs">ナレーションの再生</text><text x="379" y="133.7" font-size="9.3" fill="#333" textLength="17.5" lengthAdjust="spacingAndGlyphs">設定</text><text x="3.4" y="153.0" font-size="12.8" fill="#555" textLength="21.6" lengthAdjust="spacingAndGlyphs">223</text><text x="18" y="161.8" font-size="6.5" fill="#444">★</text><text x="3.4" y="252.9" font-size="12.8" fill="#555" textLength="21.6" lengthAdjust="spacingAndGlyphs">224</text><text x="18" y="261.8" font-size="6.5" fill="#444">★</text><text x="40.8" y="155.9" font-size="7.6" fill="#fff" textLength="103.2" lengthAdjust="spacingAndGlyphs" font-weight="700">7-21 サブモニターを使う場合</text><text x="47.7" y="171.6" font-size="6.6" fill="#555" textLength="100.8" lengthAdjust="spacingAndGlyphs">サブモニターを使うことのメリット</text><text x="52.4" y="184.3" font-size="6.5" fill="#444">•</text><text x="59.9" y="184.4" font-size="6.6" fill="#444" textLength="101.1" lengthAdjust="spacingAndGlyphs" font-weight="500">広い机に資料を並べているのと同じ</text><text x="52.4" y="197.1" font-size="6.5" fill="#444">•</text><text x="59.9" y="197.2" font-size="6.6" fill="#444" textLength="120.8" lengthAdjust="spacingAndGlyphs" font-weight="500">受講生の反応を見ながらパワポも見られる</text><text x="52.4" y="209.8" font-size="6.5" fill="#444">•</text><text x="59.9" y="209.9" font-size="6.6" fill="#444" textLength="120.8" lengthAdjust="spacingAndGlyphs" font-weight="500">目線がずれることもある、と事前に伝える</text><text x="52.4" y="222.3" font-size="6.5" fill="#444">•</text><text x="59.9" y="222.4" font-size="6.6" fill="#444" textLength="94.7" lengthAdjust="spacingAndGlyphs" font-weight="500">できればモニター画面でチェック</text><text x="40.8" y="255.9" font-size="7.6" fill="#fff" textLength="103.2" lengthAdjust="spacingAndGlyphs" font-weight="700">7-21 サブモニターを使う場合</text><text x="254.7" y="150.1" font-size="9.6" fill="#444" textLength="10.2" lengthAdjust="spacingAndGlyphs">16</text><text x="266.2" y="148.8" font-size="6" fill="#777">·</text><text x="269.9" y="150.1" font-size="9.6" fill="#444" textLength="10.2" lengthAdjust="spacingAndGlyphs">15</text><text x="281.4" y="148.8" font-size="6" fill="#777">·</text><text x="284.9" y="150.1" font-size="9.6" fill="#444" textLength="10.2" lengthAdjust="spacingAndGlyphs">14</text><text x="296.4" y="148.8" font-size="6" fill="#777">·</text><text x="300.1" y="150.1" font-size="9.6" fill="#444" textLength="10.2" lengthAdjust="spacingAndGlyphs">13</text><text x="311.6" y="148.8" font-size="6" fill="#777">·</text><text x="315.2" y="150.1" font-size="9.6" fill="#444" textLength="10.2" lengthAdjust="spacingAndGlyphs">12</text><text x="326.7" y="148.8" font-size="6" fill="#777">·</text><text x="330.3" y="150.1" font-size="9.6" fill="#444" textLength="10.2" lengthAdjust="spacingAndGlyphs">11</text><text x="341.8" y="148.8" font-size="6" fill="#777">·</text><text x="345.5" y="150.1" font-size="9.6" fill="#444" textLength="10.2" lengthAdjust="spacingAndGlyphs">10</text><text x="357.0" y="148.8" font-size="6" fill="#777">·</text><text x="363.4" y="150.1" font-size="9.6" fill="#444" textLength="5.1" lengthAdjust="spacingAndGlyphs">9</text><text x="372.3" y="148.8" font-size="6" fill="#777">·</text><text x="378.2" y="150.1" font-size="9.6" fill="#444" textLength="5.1" lengthAdjust="spacingAndGlyphs">8</text><text x="387.1" y="148.8" font-size="6" fill="#777">·</text><text x="393.2" y="150.1" font-size="9.6" fill="#444" textLength="5.1" lengthAdjust="spacingAndGlyphs">7</text><text x="402.2" y="148.8" font-size="6" fill="#777">·</text><text x="408.2" y="150.1" font-size="9.6" fill="#444" textLength="5.1" lengthAdjust="spacingAndGlyphs">6</text><text x="417.2" y="148.8" font-size="6" fill="#777">·</text><text x="423.5" y="150.1" font-size="9.6" fill="#444" textLength="5.1" lengthAdjust="spacingAndGlyphs">5</text><text x="432.4" y="148.8" font-size="6" fill="#777">·</text><text x="222.8" y="169.9" font-size="9.6" fill="#444" text-anchor="middle" transform="rotate(-90 222.8 169.9)" dy="3.4">9</text><text x="222.8" y="179.3" font-size="6" fill="#777" text-anchor="middle">·</text><text x="222.8" y="185.2" font-size="9.6" fill="#444" text-anchor="middle" transform="rotate(-90 222.8 185.2)" dy="3.4">8</text><text x="222.8" y="194.6" font-size="6" fill="#777" text-anchor="middle">·</text><text x="222.8" y="200" font-size="9.6" fill="#444" text-anchor="middle" transform="rotate(-90 222.8 200)" dy="3.4">7</text><text x="222.8" y="209.4" font-size="6" fill="#777" text-anchor="middle">·</text><text x="222.8" y="215.3" font-size="9.6" fill="#444" text-anchor="middle" transform="rotate(-90 222.8 215.3)" dy="3.4">6</text><text x="222.8" y="224.7" font-size="6" fill="#777" text-anchor="middle">·</text><text x="222.8" y="230.2" font-size="9.6" fill="#444" text-anchor="middle" transform="rotate(-90 222.8 230.2)" dy="3.4">5</text><text x="222.8" y="239.6" font-size="6" fill="#777" text-anchor="middle">·</text><text x="222.8" y="245.7" font-size="9.6" fill="#444" text-anchor="middle" transform="rotate(-90 222.8 245.7)" dy="3.4">4</text><text x="222.8" y="255.1" font-size="6" fill="#777" text-anchor="middle">·</text><text x="222.8" y="260.6" font-size="9.6" fill="#444" text-anchor="middle" transform="rotate(-90 222.8 260.6)" dy="3.4">3</text><text x="222.8" y="270.0" font-size="6" fill="#777" text-anchor="middle">·</text><text x="222.8" y="275.6" font-size="9.6" fill="#444" text-anchor="middle" transform="rotate(-90 222.8 275.6)" dy="3.4">2</text><text x="222.8" y="285.0" font-size="6" fill="#777" text-anchor="middle">·</text></svg>
<svg class="abs" style="left:294.4px;top:186.6px" width="9" height="14" viewBox="0 0 9 14"><path d="M.6.8v10.4l2.6-2.4 1.8 4.2 1.6-.7L4.8 8.2h3.4z" fill="#fff" stroke="#111" stroke-width=".9"/></svg></div>
<div class="abs" style="left:448.3px;top:176.2px;width:57.4px;height:57.4px;border-radius:50%;background:rgba(80,80,86,.84)"></div>
<svg class="abs" style="left:468.1px;top:194.6px" width="25" height="22" viewBox="0 0 25 22"><path d="M2.6 3.2v15.6a1.6 1.6 0 0 0 2.4 1.4l14.2-7.8a1.6 1.6 0 0 0 0-2.8L5 1.8a1.6 1.6 0 0 0-2.4 1.4z" fill="#fff"/></svg>
<div class="abs" style="left:306.0px;top:389.5px;font-size:10px;line-height:13px;color:#cfcfcf;white-space:nowrap;letter-spacing:0">わかばITコンサルティング</div>
<div class="abs" style="left:666.1px;top:381px;font-size:16px;line-height:21px;color:#9c9c9c;white-space:nowrap;letter-spacing:-.1px">226</div>
<svg class="abs" style="left:700.5px;top:381.6px" width="27" height="20" viewBox="0 0 27 20"><path d="M0 .6v18.8L14 10z" fill="#8db4dc"/><path d="M8.4.2v19.6L26 10z" fill="#1560a8"/></svg>
<svg class="abs" style="left:732.1px;top:0px" width="221" height="124" viewBox="0 0 221 124">
<defs><linearGradient id="wl" x1="0" x2="1"><stop offset="0" stop-color="#e3e3e2"/><stop offset=".55" stop-color="#ebeae8"/><stop offset="1" stop-color="#e2e0dd"/></linearGradient></defs>
<rect width="221" height="124" fill="url(#wl)"/>
<rect x="0" y="104.5" width="221" height="20" fill="#e6dccf"/>
<rect x="0" y="100" width="221" height="5" fill="#efeeec"/>
<rect x="190.4" y="0" width="30" height="75.7" fill="#dcc198"/>
<path d="M192.4 0v75M205.4 0v75M213.4 0v75" stroke="#d2b58a" stroke-width="1"/>
<!-- lamp -->
<path d="M23.4 54 L2.4 112 M24.4 54 L31.4 112 M24.4 54 L57.4 108" stroke="#cdb98f" stroke-width=".9" fill="none"/>
<circle cx="20.9" cy="47.5" r="7.5" fill="#f6f6f4"/>
<path d="M21.4 55a9 9 0 0 1 12-6z" fill="#c9c6c0"/>
<!-- shelf -->
<path d="M25.4 42.6h16v2.4h-16zM41.4 38h14v12h-14zM31.4 56h20v2.4h-20zM19.4 58h16v4h-16z" fill="#ddd0b8"/>
<rect x="43.9" y="40.5" width="8.5" height="8" fill="#b9c6d2"/><rect x="45.9" y="42" width="3.4" height="5.6" fill="#5e90c4"/>
<circle cx="31.9" cy="36" r="2.6" fill="#9bbf6a"/><rect x="30.2" y="38" width="3.4" height="4.6" fill="#f2f1ee"/>
<!-- sofa -->
<path d="M53.4 72q2-4 8-3l26 2q6 0 6 6v25h-40z" fill="#d3cabc"/>
<path d="M61.4 70l20-4 6 14-22 6z" fill="#c4bcb0"/>
<rect x="51.4" y="86" width="44" height="14" rx="3" fill="#e4dccf"/>
<path d="M51.4 78v30M59.4 78v30" stroke="#cdb98f" stroke-width="1.2"/>
<!-- plant -->
<g fill="#4faa3c"><path d="M35.4 101q-14-8-13-22 9 6 13 22z"/><path d="M35.4 101q14-8 14-22-10 6-14 22z"/><path d="M35.4 101q-6-18-1-35 6 17 1 35z"/><path d="M35.4 101q-16-2-19-12 12 0 19 12z" fill="#3f9632"/><path d="M35.4 101q14-2 17-12-11 0-17 12z" fill="#3f9632"/><path d="M35.4 101q-10-12-7-27 8 10 7 27z" fill="#62bb48"/><path d="M35.4 101q9-12 7-26-8 10-7 26z" fill="#62bb48"/></g>
<path d="M29.4 99h12.5l-1 8.5h-10.5z" fill="#8d8f92"/>
<!-- person -->
<path d="M45.4 124q2-20 16-26l30-11h34l26 9q13 5 16 28z" fill="#17171a"/>
<path d="M92.4 91q16 9 33 0l3 33h-38z" fill="#d5cdc1"/>
<path d="M99.4 100l3 3M111.4 106l2 4M106.4 114l3 3M117.4 100l2 4M97.4 112l2 4M119.4 115l2 4M103.4 108l2 2M114.4 117l2 3" stroke="#98a09a" stroke-width="1.2"/>
<path d="M96.4 78h25v15q-12 8-25 0z" fill="#d9b097"/>
<ellipse cx="106.9" cy="41" rx="30.4" ry="30" fill="#2a2423"/>
<path d="M77.4 44q-3 20 4 28l6-4 1-20zM136.4 44q3 20-3 28l-6-4-1-20z" fill="#2a2423"/>
<ellipse cx="108.4" cy="59.5" rx="24" ry="29" fill="#e9c2aa"/>
<path d="M82.4 54q-1-18 8-24 14-10 32-3 12 6 11 26-6-14-16-19-12 2-22 6-9 5-13 14z" fill="#2a2423"/>
<g fill="rgba(236,190,178,.5)" stroke="#7e2f2a" stroke-width="1.4"><rect x="85.2" y="48.6" width="21" height="13.6" rx="5.5"/><rect x="110.6" y="48.6" width="21" height="13.6" rx="5.5"/></g>
<path d="M106.2 52.6q2.2-1.2 4.4 0" stroke="#7e2f2a" stroke-width="1.3" fill="none"/>
<ellipse cx="95.8" cy="55.4" rx="3" ry="1.3" fill="#3a2a26"/><ellipse cx="121.0" cy="55.4" rx="3" ry="1.3" fill="#3a2a26"/>
<path d="M105.4 67.6q3.2 1.8 6.4 0" stroke="#c39885" stroke-width="1.1" fill="none"/>
<path d="M101.0 74q8.4-2.6 16.8 0-2 5.6-8.4 5.6t-8.4-5.6z" fill="#b4504a"/>
<path d="M103.0 74.8q6.4-1.4 12.8 0l-1 1.6h-10.8z" fill="#f3e8e2"/>
<!-- name tag -->
<rect x="0" y="107" width="53.6" height="15.4" fill="rgba(70,70,70,.62)"/>
<text x="3" y="119.6" font-family="Liberation Sans, Noto Sans CJK JP, sans-serif" font-size="12.6" fill="#fff" letter-spacing=".2">山本和美</text>
</svg>
<div class="abs" style="left:732.1px;top:124px;width:221px;height:287px;background:#000"></div>
</div><!--/SLIDE-->
<!-- selection -->
<div class="abs" style="left:606.5px;top:278px;width:957px;height:414.6px;border:2px solid #8b3dff;pointer-events:none"></div>
<div class="hc" style="left:599.5px;top:271.5px"></div><div class="hc" style="left:1554.5px;top:271.5px"></div>
<div class="hc" style="left:599.5px;top:683.6px"></div><div class="hc" style="left:1554.5px;top:683.6px"></div>
<div class="hp" style="left:1073.4px;top:274.3px;width:23.8px;height:9.4px"></div>
<div class="hp" style="left:1073.4px;top:686.9px;width:23.8px;height:9.4px"></div>
<div class="hp" style="left:602.9px;top:473.2px;width:9.4px;height:23.8px"></div>
<div class="hp" style="left:1558.1px;top:473.2px;width:9.4px;height:23.8px"></div>
<div class="abs" style="left:1069.5px;top:730.5px;width:32px;height:32px;border-radius:50%;background:#fff;border:1px solid #c6c8ce;box-shadow:0 1px 3px rgba(64,87,109,.18)"></div>
<svg class="abs" style="left:1076.5px;top:737.5px" width="18" height="18" viewBox="0 0 18 18" fill="none" stroke="#0e1318" stroke-width="1.5" stroke-linecap="round" stroke-linejoin="round"><path d="M3.2 10.6A6 6 0 0 1 12.8 4.2"/><path d="M13.2 1.6v3.2H10"/><path d="M14.8 7.4A6 6 0 0 1 5.2 13.8"/><path d="M4.8 16.4v-3.2H8"/></svg>
<!-- scrollbar -->
<div class="abs" style="left:1695.6px;top:76px;width:2.4px;height:799px;background:#b2b4ba"></div>
</div>
<div id="edge"></div>
</body>
</html>
